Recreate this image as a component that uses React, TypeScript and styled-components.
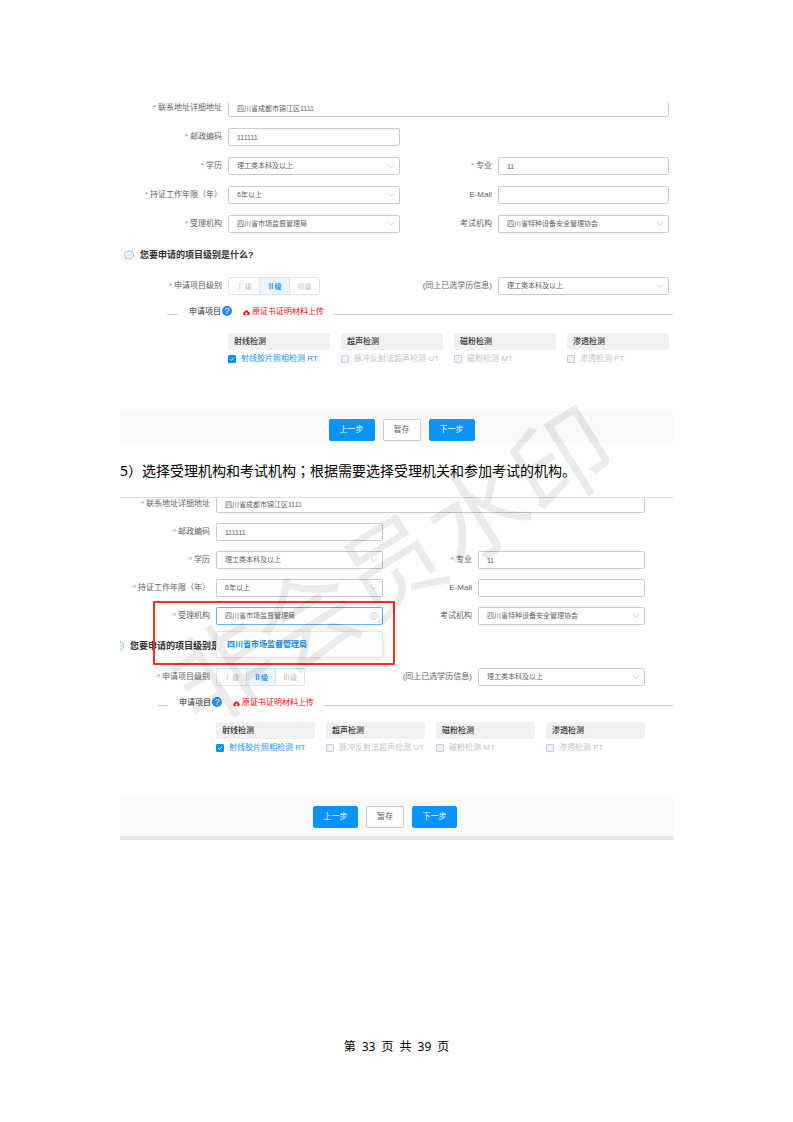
import React, { useId } from "react";
import styled, { ThemeProvider, createGlobalStyle, css } from "styled-components";

const latinFirst = '"Liberation Sans", "Noto Sans CJK SC", sans-serif';
const docFont = '"Noto Sans", "Noto Sans CJK SC", sans-serif';

const roomy = {
  columns: "102fr 172fr 86fr 171fr",
  padRight: 4,
  rowGap: 11,
  lift: -4,
  ruleTop: false,
  headingLeft: 4,
  headingTop: 13,
  level: 30,
  dividerLeft: 47,
  methodsTop: 13,
  barTop: 46,
  barPadding: "8px 0 1px 10px",
  button: 46,
  tail: 0,
};

const tight = {
  ...roomy,
  columns: "90fr 167fr 83fr 167fr",
  padRight: 28,
  rowGap: 10,
  lift: -3,
  ruleTop: true,
  headingLeft: -6,
  headingTop: 12,
  level: 29,
  dividerLeft: 37,
  methodsTop: 11,
  barTop: 44,
  barPadding: "8px 23px 8px 0",
  button: 45,
  tail: 4,
};

type Density = typeof roomy;
type Themed = { theme: Density };

const GlobalStyle = createGlobalStyle`
  *, *::before, *::after { box-sizing: border-box; }
  body { margin: 0; background: #fff; }
  button, input, select { font: inherit; margin: 0; }
`;

const Page = styled.main`
  position: relative;
  display: flex;
  flex-direction: column;
  min-height: 100vh;
  padding: 103px 120px 65px;
  overflow: hidden;
  font-family: ${docFont};
  color: #000;
`;

const Instruction = styled.p`
  margin: 0;
  padding: 16px 0 14px;
  font-size: 14px;
  line-height: 25px;
`;

const CenteredMark = styled.span`
  font-family: "Noto Sans CJK TC", sans-serif;
`;

const PageNumber = styled.footer`
  display: flex;
  justify-content: center;
  gap: 6px;
  margin-top: auto;
  font-size: 12px;
  line-height: 20px;
`;

const Watermark = styled.div`
  position: absolute;
  top: 50%;
  left: 49%;
  transform: translate(-50%, -50%) rotate(-32deg);
  font-family: "Noto Sans CJK SC", sans-serif;
  font-size: 100px;
  font-weight: 400;
  line-height: 1;
  white-space: nowrap;
  color: rgba(0, 0, 0, 0.08);
  pointer-events: none;
  z-index: 5;
`;

const Panel = styled.form<Themed>`
  position: relative;
  overflow: hidden;
  border-top: ${({ theme }) => (theme.ruleTop ? "1px solid #dcdcdf" : "none")};
  border-bottom: ${({ theme }) => theme.tail}px solid #e6e6e6;
  font-family: ${latinFirst};
  font-size: 8px;
  line-height: 12px;
  color: #606266;
`;

const gridColumns = css<Themed>`
  display: grid;
  grid-template-columns: ${({ theme }) => theme.columns};
  column-gap: 6px;
  padding-right: ${({ theme }) => theme.padRight}px;
`;

const Fields = styled.div<Themed>`
  ${gridColumns}
  grid-auto-rows: 18px;
  row-gap: ${({ theme }) => theme.rowGap}px;
  margin-top: ${({ theme }) => theme.lift}px;
`;

const LevelFields = styled.div`
  ${gridColumns}
  grid-auto-rows: 18px;
  margin-top: 13px;
`;

const Label = styled.label<{ $required?: boolean; $column?: number }>`
  grid-column: ${({ $column }) => $column ?? 1};
  align-self: center;
  justify-self: end;
  white-space: nowrap;
  ${({ $required }) =>
    $required &&
    css`
      &::before {
        content: "*";
        margin-right: 2px;
        color: #f56c6c;
      }
    `}
`;

const Control = styled.div<{ $wide?: boolean }>`
  position: relative;
  display: flex;
  min-width: 0;
  ${({ $wide }) => $wide && "grid-column: 2 / -1;"}
`;

const fieldLook = css`
  width: 100%;
  height: 18px;
  padding: 0 8px;
  border: 1px solid #c8cad6;
  border-radius: 2px;
  background: #fff;
  color: #606266;
  font-size: 7px;
  line-height: 16px;
  outline: none;
`;

const TextBox = styled.input`
  ${fieldLook}
`;

const Picker = styled.select<{ $open?: boolean }>`
  ${fieldLook}
  appearance: none;
  border-color: ${({ $open }) => ($open ? "#5db4fa" : "#c8cad6")};
`;

const FieldIcon = styled.svg`
  position: absolute;
  top: 5px;
  right: 5px;
  width: 8px;
  height: 8px;
  fill: none;
  stroke: #b4b8c2;
  stroke-width: 1;
  pointer-events: none;
`;

const Options = styled.ul`
  position: absolute;
  top: 24px;
  left: 0;
  right: 0;
  z-index: 2;
  margin: 0;
  padding: 4px 0;
  border: 1px solid #e4e7ed;
  border-radius: 2px;
  background: #fff;
  box-shadow: 0 1px 6px rgba(0, 0, 0, 0.12);
  list-style: none;
`;

const Option = styled.li`
  padding: 0 10px;
  color: #0d8ff5;
  font-size: 8px;
  font-weight: 700;
  line-height: 17px;
`;

const Highlight = styled.div`
  position: absolute;
  top: -6px;
  right: -12px;
  bottom: -40px;
  left: -63px;
  z-index: 3;
  border: 2px solid #fb3024;
  border-radius: 1px;
  pointer-events: none;
`;

const Heading = styled.h2<Themed>`
  display: flex;
  align-items: center;
  gap: 6px;
  margin: ${({ theme }) => theme.headingTop}px 0 0 ${({ theme }) => theme.headingLeft}px;
  color: #303133;
  font-size: 9px;
  font-weight: 700;
  line-height: 18px;
`;

const Levels = styled.fieldset`
  display: flex;
  justify-self: start;
  min-width: 0;
  margin: 0;
  padding: 0;
  border: 1px solid #dfe3ec;
  border-radius: 2px;
`;

const Level = styled.label<Themed & { $on?: boolean }>`
  position: relative;
  display: grid;
  place-items: center;
  width: ${({ theme }) => theme.level}px;
  background: ${({ $on }) => ($on ? "#ebf4ff" : "#fff")};
  color: ${({ $on }) => ($on ? "#1890ff" : "#b9bcc4")};
  font-family: "Noto Sans CJK SC", sans-serif;
  font-size: 7px;
  font-weight: ${({ $on }) => ($on ? 700 : 400)};
  & + & { border-left: 1px solid #dfe3ec; }
  input {
    position: absolute;
    inset: 0;
    opacity: 0;
  }
`;

const Divider = styled.div<Themed>`
  display: flex;
  align-items: center;
  height: 16px;
  margin-top: 9px;
  padding-left: ${({ theme }) => theme.dividerLeft}px;
  white-space: nowrap;
`;

const Rule = styled.span<{ $fill?: boolean }>`
  flex: ${({ $fill }) => ($fill ? "1" : "0 0 11px")};
  height: 1px;
  margin-top: 4px;
  background: #cfd1d8;
`;

const ProjectTitle = styled.span`
  margin: 0 1px 0 11px;
  color: #303133;
`;

const HelpButton = styled.button`
  display: grid;
  width: 10px;
  height: 10px;
  margin-bottom: 2px;
  padding: 0;
  place-items: center;
  border: 0;
  border-radius: 50%;
  background: #1e8cf5;
  color: #fff;
  font-size: 9px;
  line-height: 10px;
`;

const UploadLink = styled.a`
  display: flex;
  align-items: center;
  gap: 2px;
  margin: 0 9px 0 11px;
  color: #fb0a0a;
  text-decoration: none;
`;

const MethodArea = styled.div<Themed>`
  ${gridColumns}
  margin-top: ${({ theme }) => theme.methodsTop}px;
`;

const Methods = styled.div`
  display: grid;
  grid-column: 2 / -1;
  grid-template-columns: repeat(4, minmax(0, 1fr));
  column-gap: 11px;
`;

const MethodTitle = styled.h3`
  margin: 0 0 3px;
  padding-left: 6px;
  border-radius: 3px;
  background: #f1f1f1;
  color: #303133;
  font-size: 8px;
  font-weight: 500;
  line-height: 17px;
`;

const Choice = styled.label<{ $on?: boolean }>`
  display: flex;
  align-items: center;
  gap: 5px;
  color: ${({ $on }) => ($on ? "#1890ff" : "#bfc2c9")};
  white-space: nowrap;
`;

const Tick = styled.input`
  flex: none;
  appearance: none;
  width: 8px;
  height: 8px;
  border: 1px solid #c5cde0;
  border-radius: 1px;
  background: #edf2fc;
  &:checked {
    border-color: #0d8ff0;
    background: #0d8ff0
      url("data:image/svg+xml,%3Csvg xmlns='http://www.w3.org/2000/svg' viewBox='0 0 6 6'%3E%3Cpath d='M1 3l1.5 1.5L5 1.5' fill='none' stroke='white' stroke-width='.8'/%3E%3C/svg%3E");
  }
`;

const ActionBar = styled.div<Themed>`
  display: flex;
  justify-content: center;
  gap: 8px;
  margin-top: ${({ theme }) => theme.barTop}px;
  padding: ${({ theme }) => theme.barPadding};
  background: #f9f9f9;
`;

const Action = styled.button<Themed & { $primary?: boolean }>`
  width: ${({ theme, $primary }) => ($primary ? theme.button : 38)}px;
  height: 22px;
  padding: 0;
  border: 1px solid ${({ $primary }) => ($primary ? "#0894ff" : "#c8cad6")};
  border-radius: 2px;
  background: ${({ $primary }) => ($primary ? "#0894ff" : "#fff")};
  color: ${({ $primary }) => ($primary ? "#fff" : "#606266")};
  font-size: 8px;
  line-height: 20px;
`;

function ChatIcon() {
  return (
    <svg width="10" height="10" viewBox="0 0 20 20" fill="none" stroke="#5b9cff" strokeWidth="1.5" aria-hidden="true">
      <path d="M10 2c5 0 9 3.4 9 7.9s-4 7.9-9 7.9c-1.3 0-2.6-.2-3.7-.7L2.5 18l.7-3.2C1.8 13.5 1 11.8 1 9.9 1 5.4 5 2 10 2z" strokeLinejoin="round" />
      <path d="M5 10h2M9 10h2M13 10h2" strokeWidth="2" />
    </svg>
  );
}

function CloudIcon() {
  return (
    <svg width="7" height="7" viewBox="0 0 14 14" aria-hidden="true">
      <path d="M3.5 12.5a3.4 3.4 0 0 1-.6-6.7 4.2 4.2 0 0 1 8.2 0 3.4 3.4 0 0 1-.6 6.7H8.2V9.6h2L7 6 3.8 9.6h2v2.9z" fill="#fb0a0a" />
    </svg>
  );
}

type FieldProps = { label: string; required?: boolean; value?: string; column?: number; wide?: boolean };

function TextField({ label, required, value = "", column = 1, wide }: FieldProps) {
  const id = useId();
  return (
    <>
      <Label htmlFor={id} $required={required} $column={column}>{label}</Label>
      <Control $wide={wide}>
        <TextBox id={id} defaultValue={value} />
      </Control>
    </>
  );
}

function SelectField({ label, required, value = "", column = 1, open }: FieldProps & { open?: boolean }) {
  const id = useId();
  return (
    <>
      <Label htmlFor={id} $required={required} $column={column}>{label}</Label>
      <Control>
        <Picker id={id} defaultValue={value} $open={open}>
          <option>{value}</option>
        </Picker>
        <FieldIcon viewBox="0 0 8 8" aria-hidden="true">
          {open ? (
            <>
              <circle cx="4" cy="4" r="3.3" strokeWidth=".6" />
              <path d="M2.8 2.8l2.4 2.4M5.2 2.8L2.8 5.2" strokeWidth=".6" />
            </>
          ) : (
            <path d="M1.2 2.6L4 5.4l2.8-2.8" strokeWidth=".7" />
          )}
        </FieldIcon>
        {open && (
          <>
            <Options>
              <Option>{value}</Option>
            </Options>
            <Highlight />
          </>
        )}
      </Control>
    </>
  );
}

const levels = ["Ⅰ 级", "Ⅱ级", "Ⅲ级"];
const methods = [
  { title: "射线检测", item: "射线胶片照相检测 RT", on: true },
  { title: "超声检测", item: "脉冲反射法超声检测 UT" },
  { title: "磁粉检测", item: "磁粉检测 MT" },
  { title: "渗透检测", item: "渗透检测 PT" },
];

function ApplicationForm({ density, agencyOpen }: { density: Density; agencyOpen?: boolean }) {
  const group = useId();
  return (
    <ThemeProvider theme={density}>
      <Panel>
        <Fields>
          <TextField label="联系地址详细地址" required wide value="四川省成都市锦江区1111" />
          <TextField label="邮政编码" required value="111111" />
          <SelectField label="学历" required value="理工类本科及以上" />
          <TextField label="专业" required column={3} value="11" />
          <SelectField label="持证工作年限（年）" required value="6年以上" />
          <TextField label="E-Mail" column={3} />
          <SelectField label="受理机构" required value="四川省市场监督管理局" open={agencyOpen} />
          <SelectField label="考试机构" column={3} value="四川省特种设备安全管理协会" />
        </Fields>
        <Heading>
          <ChatIcon />
          您要申请的项目级别是什么?
        </Heading>
        <LevelFields>
          <Label as="span" id={`${group}-level`} $required>申请项目级别</Label>
          <Levels aria-labelledby={`${group}-level`}>
            {levels.map((level, i) => (
              <Level key={level} $on={i === 1}>
                <input type="radio" name={group} defaultChecked={i === 1} />
                {level}
              </Level>
            ))}
          </Levels>
          <SelectField label="(同上已选学历信息)" column={3} value="理工类本科及以上" />
        </LevelFields>
        <Divider>
          <Rule />
          <ProjectTitle>申请项目</ProjectTitle>
          <HelpButton type="button">?</HelpButton>
          <UploadLink href="#upload">
            <CloudIcon />
            原证书证明材料上传
          </UploadLink>
          <Rule $fill />
        </Divider>
        <MethodArea>
          <Methods>
            {methods.map(({ title, item, on }) => (
              <div key={title}>
                <MethodTitle>{title}</MethodTitle>
                <Choice $on={on}>
                  <Tick type="checkbox" defaultChecked={on} disabled={!on} />
                  {item}
                </Choice>
              </div>
            ))}
          </Methods>
        </MethodArea>
        <ActionBar>
          <Action type="button" $primary>上一步</Action>
          <Action type="button">暂存</Action>
          <Action type="button" $primary>下一步</Action>
        </ActionBar>
      </Panel>
    </ThemeProvider>
  );
}

const pageNumber = ["第", "33", "页", "共", "39", "页"];

export default function App() {
  return (
    <Page lang="zh-CN">
      <GlobalStyle />
      <ApplicationForm density={roomy} />
      <Instruction>
        5<CenteredMark lang="zh-TW">）</CenteredMark>选择受理机构和考试机构
        <CenteredMark lang="zh-TW">；</CenteredMark>根据需要选择受理机关和参加考试的机构。
      </Instruction>
      <ApplicationForm density={tight} agencyOpen />
      <PageNumber>
        {pageNumber.map((part, i) => (
          <span key={i}>{part}</span>
        ))}
      </PageNumber>
      <Watermark aria-hidden="true">非会员水印</Watermark>
    </Page>
  );
}
